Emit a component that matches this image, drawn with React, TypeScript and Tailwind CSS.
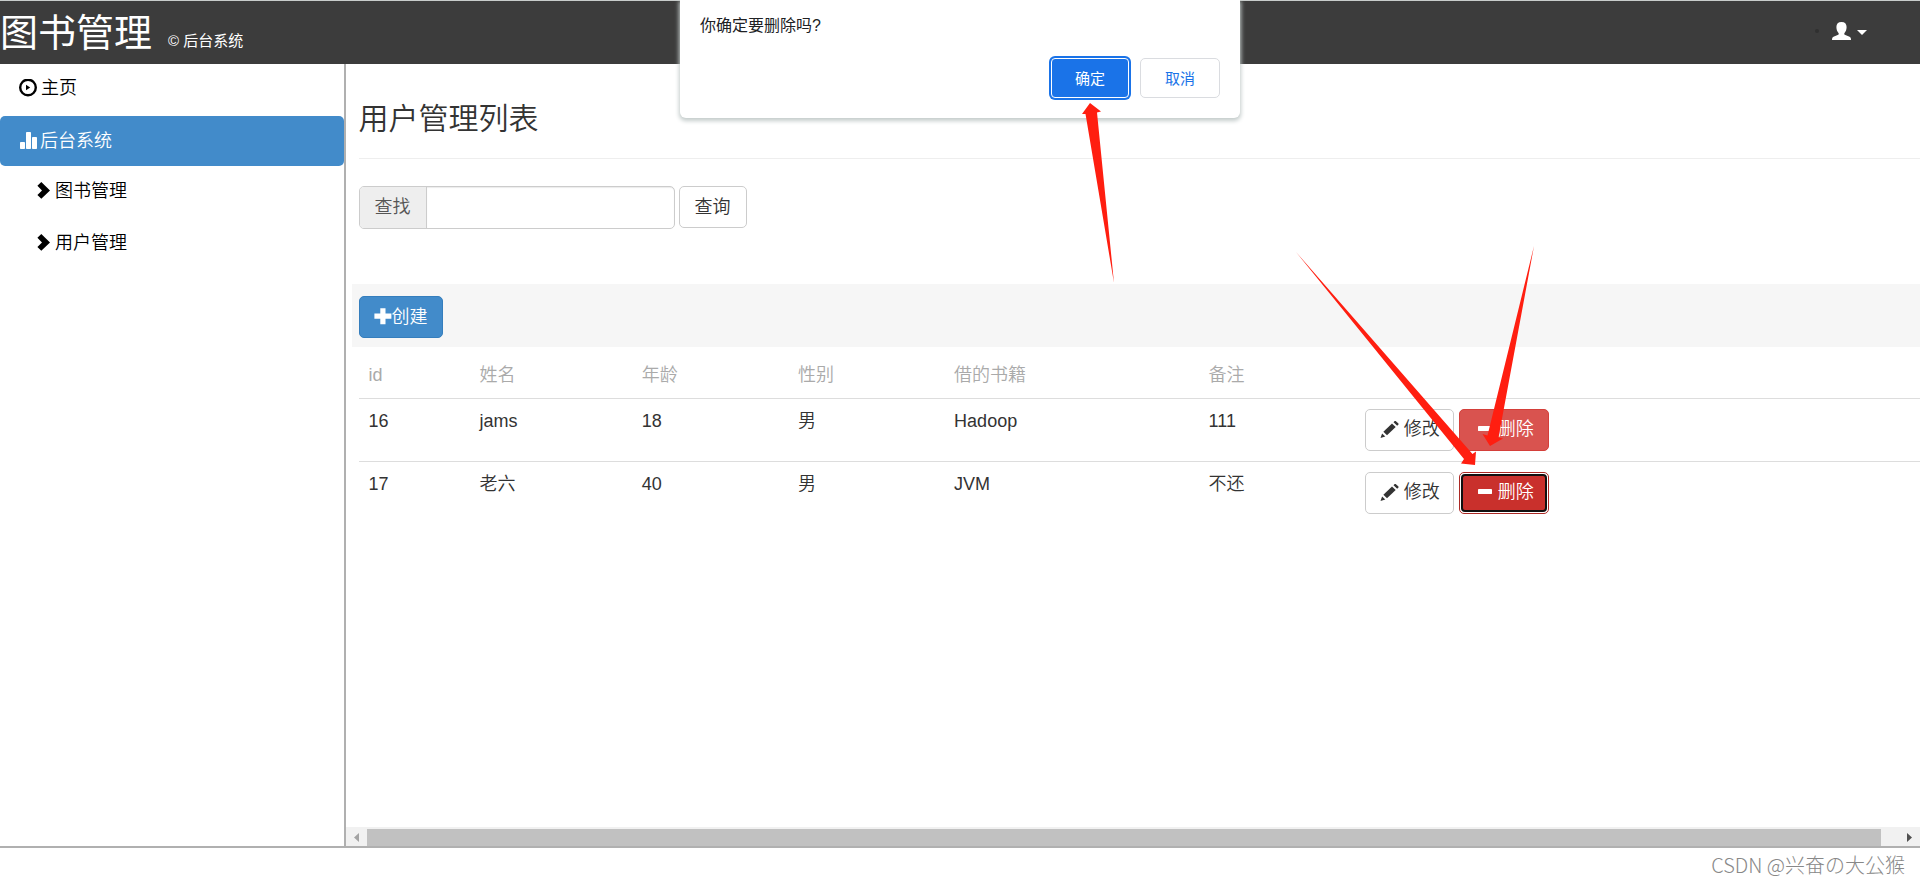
import React, { useState } from "react";

export interface userType {
    id: number,
    name: string,
    age: number,
    sex: string,
    book: string,
    remark: string
};

const users: userType[] = [
    { id: 16, name: "jams", age: 18, sex: "男", book: "Hadoop", remark: "111" },
    { id: 17, name: "老六", age: 40, sex: "男", book: "JVM", remark: "不还" }
];

function PlayIcon() {
    return (
        <svg className="h-[18px] w-[18px]" viewBox="0 0 18 18" aria-hidden="true">
            <circle cx="9" cy="8.5" r="7.8" fill="none" stroke="currentColor" strokeWidth="2.4" />
            <path d="M7 5.800v5.400L11.200 8.500z" fill="currentColor" />
        </svg>
    );
}

function StatsIcon() {
    return (
        <svg className="h-[18px] w-[18px]" viewBox="0 0 18 18" fill="currentColor" aria-hidden="true">
            <rect x="1" y="10" width="5" height="7" rx="0.8" />
            <rect x="7" y="0" width="5" height="17" rx="0.8" />
            <rect x="13" y="5" width="5" height="12" rx="0.8" />
        </svg>
    );
}

function ChevronIcon() {
    return (
        <svg className="h-[18px] w-[14px]" viewBox="0 0 14 18" fill="currentColor" aria-hidden="true">
            <path d="M5.300 0L14 8.400l-8.700 8.400L1.400 13 6 8.400 1.400 3.800z" />
        </svg>
    );
}

function PlusIcon() {
    return (
        <svg className="h-[18px] w-[18px]" viewBox="0 0 18 18" fill="currentColor" aria-hidden="true">
            <path d="M6.300 0.200h5.200v5.400H17.400v5.200H11.500V16.200H6.300v-5.400H0.400V5.600H6.300z" />
        </svg>
    );
}

function PencilIcon() {
    return (
        <svg className="h-[18px] w-[19px]" viewBox="0 0 19 18" fill="currentColor" aria-hidden="true">
            <path d="M0.500 17l1.600-4.600 3.200 3z" />
            <path d="M3.400 10.700L12 2.400l3.700 3.500-8.700 8.300z" />
            <path d="M13.500 1.200L14.700 0q.5-.4 1 0l2.700 2.500q.4.500 0 1L17.200 4.700z" />
        </svg>
    );
}

function MinusIcon() {
    return (
        <svg className="h-[18px] w-[18px]" viewBox="0 0 18 18" fill="currentColor" aria-hidden="true">
            <rect x="3" y="5" width="14" height="5" rx="0.4" />
        </svg>
    );
}

function UserIcon() {
    return (
        <svg className="h-[18px] w-[19px]" viewBox="0 0 19 18" fill="currentColor" aria-hidden="true">
            <path d="M9.500 0C12.900 0 14.600 1.900 14.600 5c0 2.600-.8 4.700-2.100 5.900-.4.400-.3 1.500.3 1.800l4.700 2.100c1 .5 1.500 1.200 1.500 3.200H0c0-2 .5-2.700 1.500-3.200l4.700-2.100c.6-.3.700-1.400.3-1.800C5.200 9.700 4.400 7.600 4.400 5 4.400 1.900 6.100 0 9.500 0z" />
        </svg>
    );
}

function Header() {
    return (
        <header className="flex h-16 items-center justify-between border-t border-[#c8cccb] bg-[#3c3c3c] font-normal text-white">
            <div className="flex items-baseline gap-4">
                <h1 className="text-[38px] leading-[56px]">图书管理</h1>
                <small className="text-[15px]">© 后台系统</small>
            </div>
            <div className="mr-[53px] mb-1 flex items-center gap-[13px]">
                <span className="h-1 w-1 rounded-full bg-[#303030]"></span>
                <button className="flex items-center gap-[6px]" aria-label="user">
                    <UserIcon />
                    <svg className="mt-1 h-[5px] w-[10px]" viewBox="0 0 10 5" fill="currentColor" aria-hidden="true">
                        <path d="M0 0h10L5 5z" />
                    </svg>
                </button>
            </div>
        </header>
    );
}

function Sidebar() {
    return (
        <nav className="w-[18%] shrink-0 border-r-2 border-[#b0b0b0] text-black">
            <a href="#home" className="flex h-12 items-center gap-1 pl-[19px]"><PlayIcon />主页</a>
            <a href="#system" className="mt-1 flex h-[50px] items-center gap-[3px] rounded-[5px] bg-[#428bca] pl-[19px] text-white"><StatsIcon />后台系统</a>
            <ul className="flex flex-col gap-[2px] pl-9">
                <li><a href="#books" className="flex h-[50px] items-center gap-[5px]"><ChevronIcon />图书管理</a></li>
                <li><a href="#users" className="flex h-[50px] items-center gap-[5px]"><ChevronIcon />用户管理</a></li>
            </ul>
        </nav>
    );
}

function UserTable() {
    return (
        <table className="w-full table-fixed text-left">
            <colgroup>
                <col className="w-[7.1%]" />
                <col className="w-[10.4%]" />
                <col className="w-[10%]" />
                <col className="w-[10%]" />
                <col className="w-[16.3%]" />
                <col className="w-[10%]" />
                <col />
            </colgroup>
            <thead>
                <tr className="h-[51px] text-[#aaa]">
                    <th className="px-[10px] pt-[6px] font-[350]">id</th>
                    <th className="px-[10px] pt-[6px] font-[350]">姓名</th>
                    <th className="px-[10px] pt-[6px] font-[350]">年龄</th>
                    <th className="px-[10px] pt-[6px] font-[350]">性别</th>
                    <th className="px-[10px] pt-[6px] font-[350]">借的书籍</th>
                    <th className="px-[10px] pt-[6px] font-[350]">备注</th>
                    <th></th>
                </tr>
            </thead>
            <tbody>
                {users.map((user, index) => (
                    <tr key={user.id} className="h-[63px] border-t border-[#ddd] align-top">
                        <td className="p-[10px]">{user.id}</td>
                        <td className="p-[10px]">{user.name}</td>
                        <td className="p-[10px]">{user.age}</td>
                        <td className="p-[10px]">{user.sex}</td>
                        <td className="p-[10px]">{user.book}</td>
                        <td className="p-[10px]">{user.remark}</td>
                        <td className="p-[10px]">
                            <div className="flex gap-[5px]">
                                <button className="flex h-[42px] items-center gap-[5px] rounded-[5px] border border-[#ccc] bg-white pr-[13px] pl-[14px]"><PencilIcon />修改</button>
                                {index === 1 ? (
                                    <button className="rounded-[5px] border border-[#ac2925] bg-white p-px text-white">
                                        <span className="flex h-[38px] items-center gap-[5px] rounded-[4px] border-2 border-[#101010] bg-[#c9302c] pr-[11px] pl-3"><MinusIcon />删除</span>
                                    </button>
                                ) : (
                                    <button className="flex h-[42px] items-center gap-[5px] rounded-[5px] border border-[#d43f3a] bg-[#d9534f] pr-[14px] pl-[15px] text-white"><MinusIcon />删除</button>
                                )}
                            </div>
                        </td>
                    </tr>
                ))}
            </tbody>
        </table>
    );
}

function ScrollBar() {
    return (
        <div className="flex h-[19px] items-stretch bg-[#f1f1f1] pt-[2px]">
            <span className="flex w-[21px] items-center justify-center">
                <svg className="h-[9px] w-[5px]" viewBox="0 0 5 9" fill="#a3a3a3" aria-hidden="true"><path d="M5 0v9L0 4.500z" /></svg>
            </span>
            <span className="flex-1 bg-[#c1c1c1]"></span>
            <span className="flex w-[39px] items-center justify-end pr-2">
                <svg className="h-[9px] w-[5px]" viewBox="0 0 5 9" fill="#505050" aria-hidden="true"><path d="M0 0v9l5-4.500z" /></svg>
            </span>
        </div>
    );
}

function ConfirmDialog() {
    return (
        <div role="dialog" aria-label="confirm" className="absolute top-0 left-1/2 w-[560px] -translate-x-1/2 rounded-b-[6px] bg-white px-5 pt-[13px] pb-5 font-normal shadow-[0_2px_4px_1px_#c4cccb]">
            <p className="text-[16px] leading-[25px] text-[#202124]">你确定要删除吗?</p>
            <div className="mt-5 flex justify-end gap-[11px] text-[15px]">
                <button className="h-10 w-[78px] rounded-[4px] border border-white bg-[#1a73e8] text-white ring-2 ring-[#1a73e8]">确定</button>
                <button className="h-10 w-20 rounded-[5px] border border-[#dadce0] bg-white text-[#1a73e8]">取消</button>
            </div>
        </div>
    );
}

// red pointer arrows drawn over the page
function Arrows() {
    return (
        <svg className="pointer-events-none absolute top-0 left-0" width="1920" height="885" viewBox="0 0 1920 885" fill="#ff1e10" aria-hidden="true">
            <path d="M1090 103L1101 111.500 1097 112.500 1114 283 1085.500 114 1082 114z" />
            <path d="M1475 465L1461 463.500 1464 459 1296 252 1472.500 454 1476 451.500z" />
            <path d="M1490 446L1482.500 434 1487.500 435.500 1534 246 1498.500 437.500 1503 438.500z" />
        </svg>
    );
}

export default function App() {
    const [keyword, setKeyword] = useState<string>("");

    function onChange(event: React.ChangeEvent<HTMLInputElement>) {
        setKeyword(event.target.value);
    }

    function handleSubmit(event: React.FormEvent<HTMLFormElement>) {
        event.preventDefault();
    }

    return (
        <div className="relative flex min-h-screen flex-col overflow-hidden bg-white font-['Liberation_Sans','Noto_Sans_CJK_SC',sans-serif] text-[18px] leading-[25px] font-[350] text-[#333]">
            <Header />
            <div className="flex flex-1 border-b-2 border-[#b0b0b0]">
                <Sidebar />
                <main className="flex min-w-0 flex-1 flex-col">
                    <div className="flex-1">
                        <div className="pl-[13px]">
                            <h3 className="border-b border-[#eee] pt-[35px] pb-[19px] text-[30px] leading-10">用户管理列表</h3>
                            <form className="mt-[27px] flex items-start gap-1" onSubmit={handleSubmit}>
                                <div className="flex h-[43px] w-[316px] rounded-[5px] border border-[#ccc]">
                                    <label htmlFor="keyword" className="flex shrink-0 items-center rounded-l-[4px] border-r border-[#ccc] bg-[#eee] px-[15px] text-[#555]">查找</label>
                                    <input id="keyword" className="min-w-0 flex-1 rounded-r-[4px] px-[15px] shadow-[inset_0_1px_1px_rgba(0,0,0,0.08)]" name="keyword" type="text" value={keyword} onChange={onChange} />
                                </div>
                                <button className="h-[42px] rounded-[5px] border border-[#ccc] bg-white px-[15px]" type="submit">查询</button>
                            </form>
                        </div>
                        <div className="mt-[55px] ml-[6px] bg-[#f6f6f6] px-[7px] pt-3 pb-[9px]">
                            <button className="flex h-[42px] items-center rounded-[5px] border border-[#357ebd] bg-[#428bca] px-[14px] text-white"><PlusIcon />创建</button>
                        </div>
                        <div className="pl-[13px]">
                            <UserTable />
                        </div>
                    </div>
                    <ScrollBar />
                </main>
            </div>
            <footer className="flex h-[37px] items-center justify-end pr-[15px] pb-1 font-['Noto_Sans_CJK_JP',sans-serif] text-[20px] font-light text-[#888]">CSDN @兴奋の大公猴</footer>
            <ConfirmDialog />
            <Arrows />
        </div>
    );
}
